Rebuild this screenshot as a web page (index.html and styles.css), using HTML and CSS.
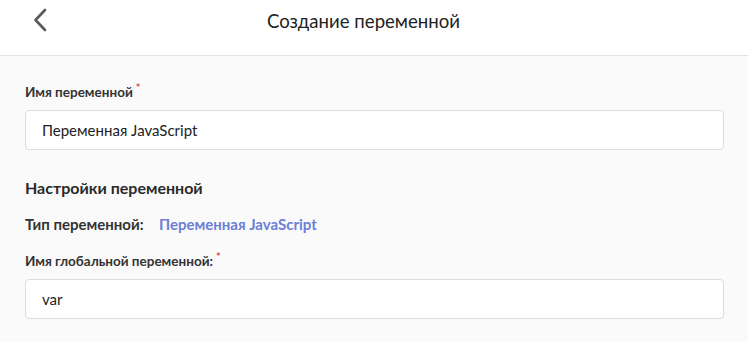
FILE: index.html
```html
<!DOCTYPE html>
<html lang="ru">
<head>
<meta charset="utf-8">
<link rel="stylesheet" href="styles.css">
</head>
<body>
<header class="topbar">
  <button class="back" aria-label="Назад">
    <svg width="14" height="24" viewBox="0 0 14 24"><path d="M12 2 L2.5 12 L12 22" fill="none" stroke="#5a5a5a" stroke-width="2.6" stroke-linecap="round" stroke-linejoin="round"/></svg>
  </button>
  <h1 class="title">Создание переменной</h1>
</header>
<main class="content">
  <label class="label">Имя переменной<span class="req">*</span></label>
  <div class="input">Переменная JavaScript</div>
  <h2 class="section">Настройки переменной</h2>
  <div class="row"><span class="key">Тип переменной:</span><span class="val">Переменная JavaScript</span></div>
  <label class="label label2">Имя глобальной переменной:<span class="req">*</span></label>
  <div class="input">var</div>
</main>
</body>
</html>
```
FILE: styles.css
```css
* { box-sizing: border-box; }
html, body { margin: 0; padding: 0; }
body {
  width: 748px;
  height: 342px;
  overflow: hidden;
  background: #fafafa;
  font-family: "Lato", "Open Sans", sans-serif;
  color: #222;
}
.topbar {
  height: 56px;
  background: #fff;
  border-bottom: 1px solid #e3e3e3;
  display: flex;
  align-items: flex-start;
  justify-content: center;
  position: relative;
  padding-right: 21px;
}
.back {
  position: absolute;
  left: 32px;
  top: 8px;
  background: none;
  border: 0;
  padding: 0;
  width: 16px;
  height: 24px;
}
.title {
  margin: 9px 0 0;
  font-size: 18.6px;
  line-height: 24px;
  font-weight: 400;
  color: #222;
}
.content {
  padding: 28px 24px 0 25px;
  display: flex;
  flex-direction: column;
}
.label {
  font-size: 13.5px;
  font-weight: 700;
  color: #333;
  line-height: 16px;
  margin-bottom: 10px;
}
.req {
  color: #d9534f;
  font-size: 11px;
  vertical-align: top;
  margin-left: 3px;
  position: relative;
  top: -4px;
}
.input {
  height: 40px;
  background: #fff;
  border: 1px solid #dcdcdc;
  border-radius: 4px;
  padding: 0 16px;
  display: flex;
  align-items: center;
  font-size: 15px;
  color: #222;
}
.section {
  margin: 27px 0 0;
  font-size: 16px;
  font-weight: 700;
  color: #2a2a2a;
  line-height: 22px;
}
.row {
  margin-top: 16px;
  font-size: 15px;
  line-height: 18px;
  display: flex;
}
.key { font-weight: 700; color: #333; width: 134px; }
.val { color: #6b7fd6; font-weight: 700; }
.label2 { margin-top: 20px; }
```
